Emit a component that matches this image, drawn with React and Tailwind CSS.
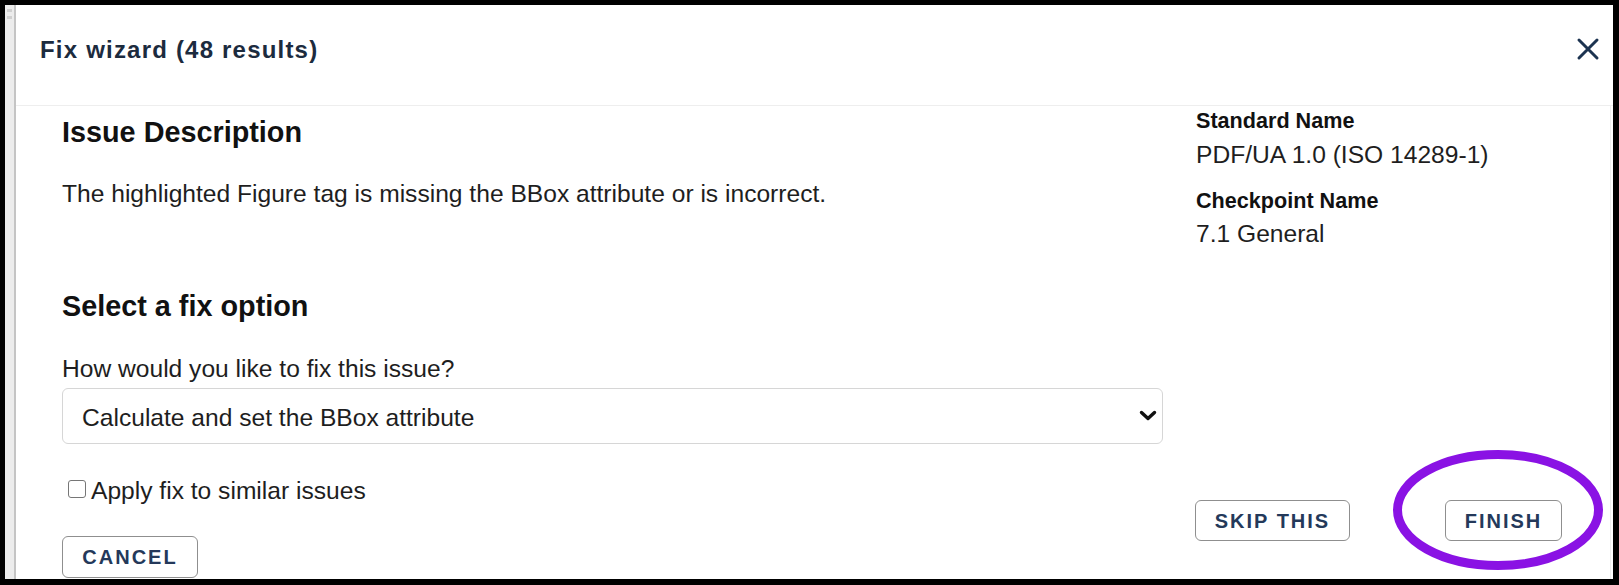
import React from "react";

export default function App() {
  const font = "font-['Liberation_Sans',Arial,sans-serif]";
  const btn =
    "flex items-center justify-center border border-[#8f8f8f] rounded-[6px] bg-white text-[20px] leading-[24px] font-bold tracking-[2px] text-[#24395a]";
  return (
    <div className={`relative w-[1619px] h-[585px] bg-black pt-[5px] pl-[5px] pr-[6px] pb-[6px] flex overflow-hidden ${font}`}>
      {/* left grey strip */}
      <div className="w-[9px] bg-[#ececec] flex flex-col items-center pt-[4px] gap-[4px]">
        <div className="w-[5px] h-[3px] bg-[#d0d0d0]" />
        <div className="w-[5px] h-[3px] bg-[#d0d0d0]" />
      </div>
      <div className="w-[2px] bg-[#c4c4c4]" />

      {/* dialog */}
      <div className="flex-1 bg-white flex flex-col">
        {/* header */}
        <div className="h-[101px] border-b border-[#eeeeee] flex items-start justify-between pl-[24px] pr-[13px] pt-[31px]">
          <h1 className="text-[24px] leading-[28px] font-bold tracking-[1.2px] text-[#1c2b3e]">
            Fix wizard (48 results)
          </h1>
          <svg width="24" height="24" viewBox="0 0 24 24" className="mt-[1px]">
            <path d="M3 3 L21 21 M21 3 L3 21" stroke="#1c3350" strokeWidth="3" strokeLinecap="round" fill="none" />
          </svg>
        </div>

        {/* body */}
        <div className="flex flex-1">
          {/* left column */}
          <div className="pl-[46px] w-[1147px] flex flex-col">
            <h2 className="mt-[9px] text-[28.8px] leading-[34px] font-bold text-[#111111]">Issue Description</h2>
            <p className="mt-[31px] text-[24.6px] leading-[28px] text-[#1e1e1e]">
              The highlighted Figure tag is missing the BBox attribute or is incorrect.
            </p>
            <h2 className="mt-[81px] text-[28.8px] leading-[34px] font-bold text-[#111111]">Select a fix option</h2>
            <label className="mt-[32px] text-[24.6px] leading-[28px] text-[#1e1e1e]">How would you like to fix this issue?</label>
            <div className="mt-[5px] h-[56px] w-[1101px] border border-[#d6d6d6] rounded-[6px] flex items-center justify-between pl-[19px] pr-[5px]">
              <span className="text-[24.6px] leading-[28px] text-[#1e1e1e] pt-[3px]">Calculate and set the BBox attribute</span>
              <svg width="18" height="12" viewBox="0 0 18 12">
                <path d="M2.5 2.5 L9 8.5 L15.5 2.5" stroke="#111111" strokeWidth="3.4" fill="none" strokeLinecap="round" strokeLinejoin="round" />
              </svg>
            </div>
            <div className="mt-[33px] flex items-start">
              <span className="ml-[6px] mt-[3px] w-[18px] h-[18px] border border-[#767676] rounded-[3px] bg-white" />
              <span className="ml-[5px] text-[24.6px] leading-[28px] text-[#1e1e1e]">Apply fix to similar issues</span>
            </div>
            <div className="mt-[31px]">
              <button className={`${btn} w-[136px] h-[42px]`}>CANCEL</button>
            </div>
          </div>

          {/* right column */}
          <div className="ml-[33px] flex-1 flex flex-col">
            <div className="mt-[3px] text-[21.6px] leading-[24px] font-bold text-[#111111]">Standard Name</div>
            <div className="mt-[8px] text-[24.6px] leading-[28px] text-[#1e1e1e]">PDF/UA 1.0 (ISO 14289-1)</div>
            <div className="mt-[20px] text-[21.6px] leading-[24px] font-bold text-[#111111]">Checkpoint Name</div>
            <div className="mt-[7px] text-[24.6px] leading-[28px] text-[#1e1e1e]">7.1 General</div>
            <div className="mt-[252px] flex">
              <button className={`${btn} w-[155px] h-[41px] -ml-[1px]`}>SKIP THIS</button>
              <button className={`${btn} w-[117px] h-[41px] ml-[95px]`}>FINISH</button>
            </div>
          </div>
          <div className="w-px bg-[#efefef] mr-[2px]" />
        </div>
      </div>

      {/* annotation ellipse */}
      <svg className="absolute left-[1393px] top-[450px]" width="210" height="120" viewBox="0 0 210 120">
        <ellipse cx="105" cy="60" rx="100.5" ry="55.5" fill="none" stroke="#8a12e4" strokeWidth="9" />
      </svg>
    </div>
  );
}
